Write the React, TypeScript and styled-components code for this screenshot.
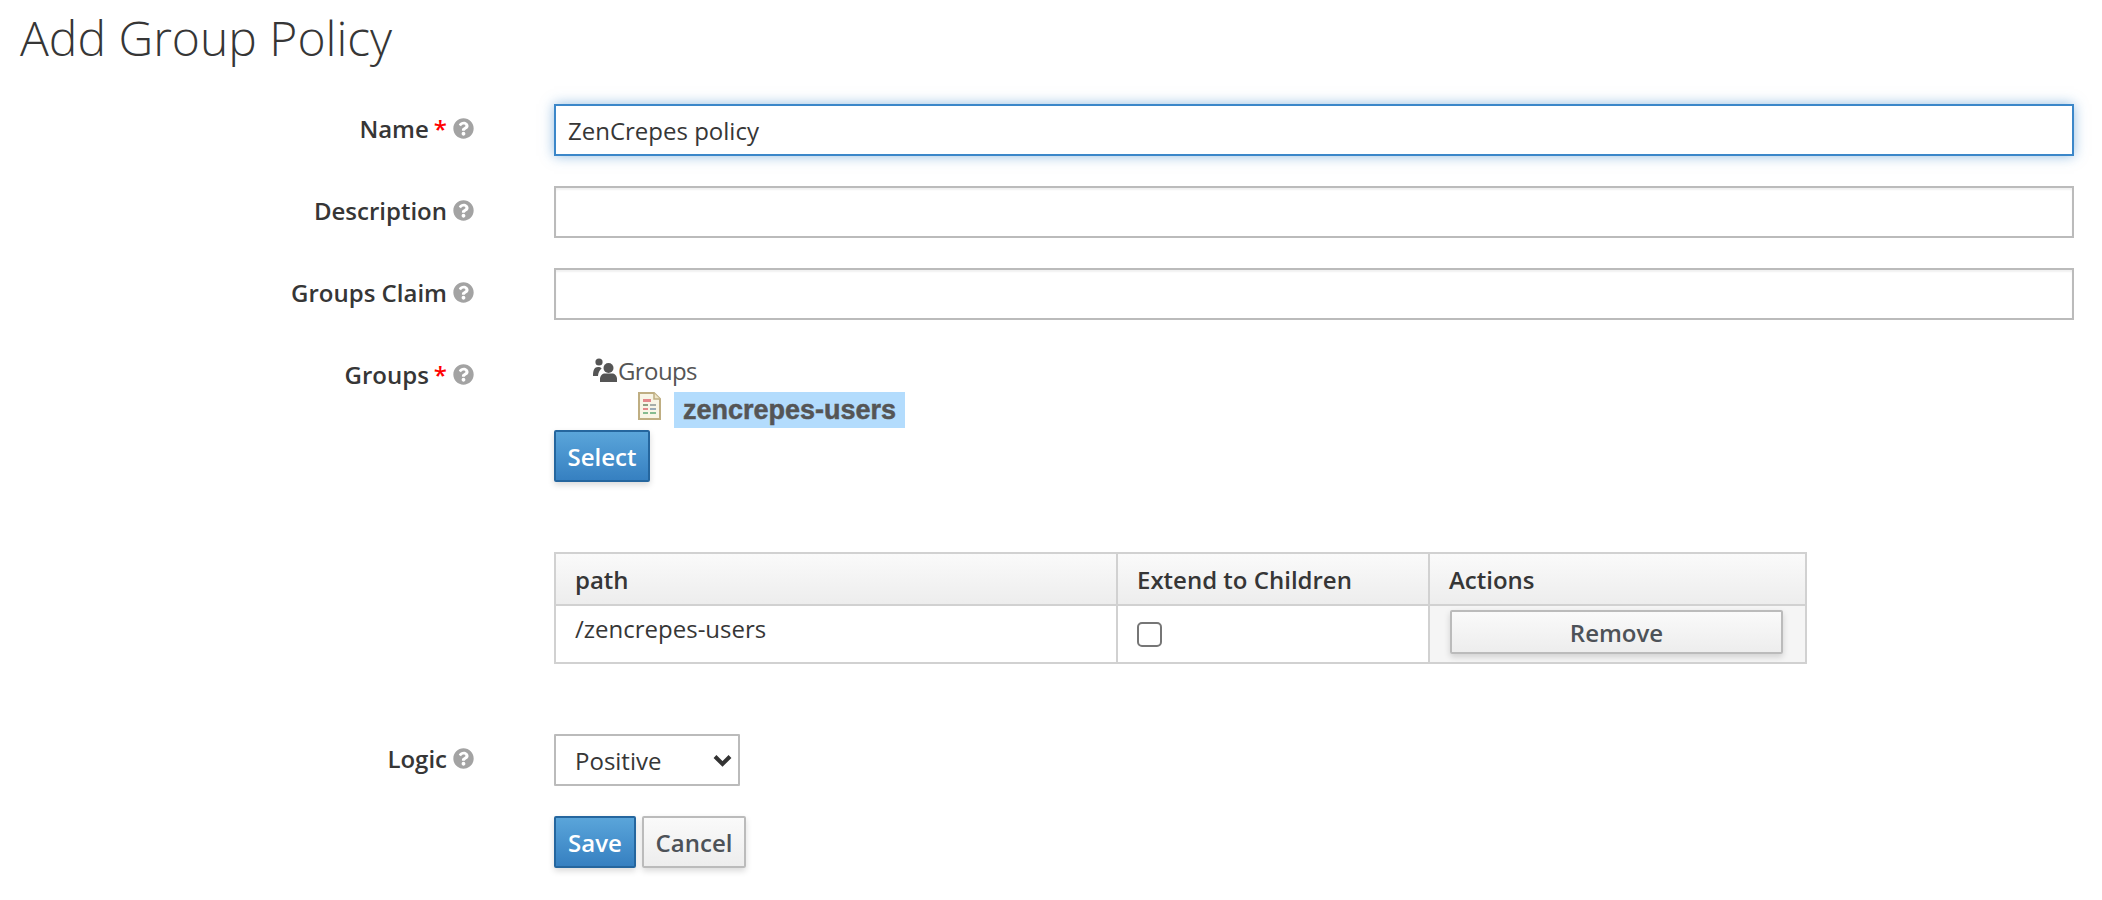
import React from 'react'
import styled, { createGlobalStyle } from 'styled-components'
import { FaQuestionCircle } from 'react-icons/fa'

const GlobalStyle = createGlobalStyle`
    html, body {
        margin: 0;
        padding: 0;
        background: #fff;
    }
    body {
        font-family: "Open Sans", "Liberation Sans", sans-serif;
        color: #363636;
    }
`

const Page = styled.div`
    width: 2102px;
    height: 900px;
    overflow: hidden;
    box-sizing: border-box;
    padding: 0 28px 0 20px;
`
const Title = styled.h1`
    margin: 0;
    height: 104px;
    padding-top: 5px;
    box-sizing: border-box;
    font-size: 48px;
    line-height: 66px;
    font-weight: 300;
    color: #363636;
`
const Row = styled.div<{ $gap?: number }>`
    display: grid;
    grid-template-columns: 454px 1520px;
    column-gap: 80px;
    margin-bottom: ${(p) => p.$gap ?? 30}px;
`
const Label = styled.label`
    display: flex;
    justify-content: flex-end;
    align-items: center;
    gap: 6px;
    height: 52px;
    padding-bottom: 4px;
    box-sizing: border-box;
    font-size: 24px;
    font-weight: 600;
    color: #363636;
`
const Required = styled.span`
    color: #f00;
    margin-left: -1px;
`
const Help = styled(FaQuestionCircle)`
    width: 21px;
    height: 21px;
    color: #a3a3a3;
`
const TextInput = styled.input<{ $focused?: boolean }>`
    display: block;
    width: 100%;
    height: 52px;
    box-sizing: border-box;
    padding: 0 12px;
    font-family: inherit;
    font-size: 24px;
    color: #363636;
    background: #fff;
    outline: none;
    border: 2px solid ${(p) => (p.$focused ? '#3b87c9' : '#bbb')};
    box-shadow: ${(p) => (p.$focused ? '0 0 12px rgba(59, 135, 201, 0.55)' : 'inset 0 2px 2px rgba(3, 3, 3, 0.06)')};
`
const Tree = styled.div`
    display: flex;
    flex-direction: column;
`
const TreeRoot = styled.div`
    display: flex;
    align-items: center;
    height: 40px;
    margin-bottom: 2px;
    padding-left: 39px;
    font-size: 24px;
    letter-spacing: -0.6px;
    color: #555;
`
const TreeNode = styled.div`
    display: flex;
    align-items: flex-start;
    height: 38px;
    padding-left: 84px;
    gap: 13px;
`
const NodeLabel = styled.span`
    display: block;
    height: 36px;
    padding: 0 9px;
    background: #b3dcfd;
    font-family: "Liberation Sans", Arial, sans-serif;
    font-size: 27px;
    font-weight: 700;
    line-height: 36px;
    color: #555;
    -webkit-text-stroke: 0.5px #555;
`
const Button = styled.button<{ $primary?: boolean; $width: number; $height?: number }>`
    display: block;
    width: ${(p) => p.$width}px;
    height: ${(p) => p.$height ?? 52}px;
    padding: 0;
    box-sizing: border-box;
    font-family: inherit;
    font-size: 24px;
    font-weight: 600;
    border-radius: 2px;
    color: ${(p) => (p.$primary ? '#fff' : '#4d5258')};
    border: 2px solid ${(p) => (p.$primary ? '#25669e' : '#bbb')};
    background: ${(p) => (p.$primary ? 'linear-gradient(#5aa5da, #3680c1)' : 'linear-gradient(#fafafa, #ededed)')};
    box-shadow: 0 3px 6px rgba(3, 3, 3, 0.15);
`
const PolicyTable = styled.table`
    width: 1251px;
    margin-top: 70px;
    margin-bottom: 70px;
    border-collapse: collapse;
    table-layout: fixed;
    font-size: 24px;
    color: #363636;
`
const HeadCell = styled.th<{ $width: number }>`
    width: ${(p) => p.$width}px;
    height: 52px;
    box-sizing: border-box;
    padding: 0 19px;
    text-align: left;
    font-weight: 600;
    border: 2px solid #d1d1d1;
    background: linear-gradient(#fafafa, #ededed);
`
const Cell = styled.td<{ $tint?: boolean }>`
    height: 58px;
    box-sizing: border-box;
    padding: 0 19px 12px;
    border: 2px solid #d1d1d1;
    background: ${(p) => (p.$tint ? '#f5f5f5' : '#fff')};
    vertical-align: middle;
`
const ActionCell = styled(Cell)`
    padding: 4px 20px 8px;
`
const Check = styled.input`
    appearance: none;
    display: block;
    width: 25px;
    height: 25px;
    margin: 12px 0 0;
    border: 2px solid #767676;
    border-radius: 5px;
    background: #fff;
`
const SelectWrap = styled.div`
    position: relative;
    width: 186px;
    height: 52px;
`
const LogicSelect = styled.select`
    appearance: none;
    display: block;
    width: 100%;
    height: 100%;
    box-sizing: border-box;
    padding: 0 19px;
    font-family: inherit;
    font-size: 24px;
    color: #363636;
    background: #fff;
    border: 2px solid #bbb;
    border-radius: 1px;
`
const Chevron = styled.svg`
    position: absolute;
    right: 8px;
    top: 20px;
    width: 19px;
    height: 13px;
    pointer-events: none;
`
const Actions = styled.div`
    display: flex;
    gap: 6px;
`

const GroupsIcon = () => (
    <svg width="25" height="24" viewBox="0 0 25 24" fill="#555">
        <circle cx="6" cy="4" r="3.6" />
        <path d="M0 18c0-6 1.5-9 5-9 1.6 0 2.8.5 3.6 1.4-2.2 1.7-3.4 4.300-3.600 7.600z" />
        <circle cx="15.500" cy="10" r="5" />
        <path d="M7 24v-3c0-3.500 2.500-5.500 5-5.500h7c2.500 0 5 2 5 5.500v3z" />
    </svg>
)

const FileIcon = () => (
    <svg width="23" height="28" viewBox="0 0 23 28">
        <path d="M1 1h15l6 6v20H1z" fill="#f8f5e6" stroke="#bfae82" strokeWidth="2" />
        <path d="M16 1v6h6" fill="#efe6c8" stroke="#bfae82" strokeWidth="1.5" />
        <rect x="5" y="7" width="8" height="3" fill="#e4888a" />
        <rect x="5" y="12" width="5" height="2" fill="#8f9f82" />
        <rect x="12" y="12" width="6" height="2" fill="#a6aeaa" />
        <rect x="5" y="16" width="5" height="2" fill="#e4888a" />
        <rect x="12" y="16" width="6" height="2" fill="#9aabb8" />
        <rect x="5" y="20" width="5" height="2" fill="#85bb90" />
        <rect x="12" y="20" width="6" height="2" fill="#85bb90" />
    </svg>
)

export default function App() {
    return (
        <Page>
            <GlobalStyle />
            <Title>Add Group Policy</Title>
            <Row>
                <Label>Name <Required>*</Required> <Help /></Label>
                <TextInput $focused defaultValue="ZenCrepes policy" />
            </Row>
            <Row>
                <Label>Description <Help /></Label>
                <TextInput />
            </Row>
            <Row>
                <Label>Groups Claim <Help /></Label>
                <TextInput />
            </Row>
            <Row $gap={0}>
                <Label>Groups <Required>*</Required> <Help /></Label>
                <div>
                    <Tree>
                        <TreeRoot><GroupsIcon />Groups</TreeRoot>
                        <TreeNode>
                            <FileIcon />
                            <NodeLabel>zencrepes-users</NodeLabel>
                        </TreeNode>
                    </Tree>
                    <Button $primary $width={96}>Select</Button>
                    <PolicyTable>
                        <thead>
                            <tr>
                                <HeadCell $width={562}>path</HeadCell>
                                <HeadCell $width={312}>Extend to Children</HeadCell>
                                <HeadCell $width={377}>Actions</HeadCell>
                            </tr>
                        </thead>
                        <tbody>
                            <tr>
                                <Cell>/zencrepes-users</Cell>
                                <Cell><Check type="checkbox" /></Cell>
                                <ActionCell $tint><Button $width={333} $height={44}>Remove</Button></ActionCell>
                            </tr>
                        </tbody>
                    </PolicyTable>
                </div>
            </Row>
            <Row>
                <Label>Logic <Help /></Label>
                <SelectWrap>
                    <LogicSelect defaultValue="Positive">
                        <option>Positive</option>
                        <option>Negative</option>
                    </LogicSelect>
                    <Chevron viewBox="0 0 19 13">
                        <polyline points="2,2.500 9.500,10 17,2.500" fill="none" stroke="#333" strokeWidth="4" />
                    </Chevron>
                </SelectWrap>
            </Row>
            <Row $gap={0}>
                <span />
                <Actions>
                    <Button $primary $width={82}>Save</Button>
                    <Button $width={104}>Cancel</Button>
                </Actions>
            </Row>
        </Page>
    )
}
